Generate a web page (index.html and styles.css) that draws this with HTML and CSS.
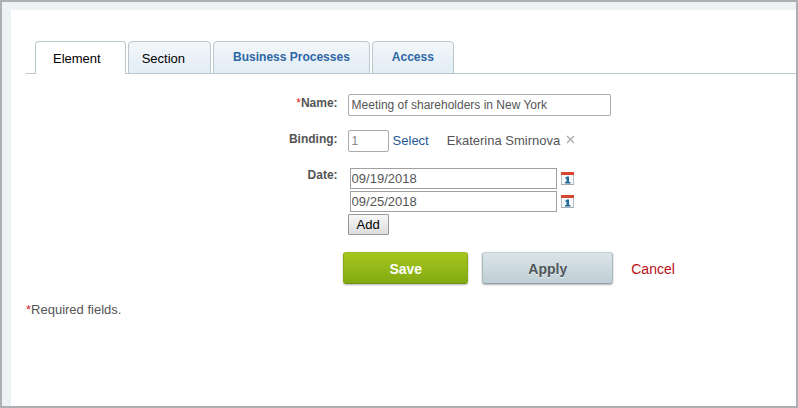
FILE: index.html
```
<!DOCTYPE html>
<html lang="en">
<head>
<meta charset="utf-8">
<title>Element</title>
<link rel="stylesheet" href="styles.css">
</head>
<body>
<main class="panel">
  <nav class="tabs">
    <a class="tab tab-active" href="#element">Element</a>
    <a class="tab tab-plain" href="#section">Section</a>
    <a class="tab" href="#processes">Business Processes</a>
    <a class="tab" href="#access">Access</a>
  </nav>
  <form class="form">
    <div class="row">
      <label class="label" for="name"><span class="star">*</span>Name:</label>
      <div class="field"><input class="input input-name" id="name" type="text" value="Meeting of shareholders in New York"></div>
    </div>
    <div class="row">
      <label class="label" for="binding">Binding:</label>
      <div class="field">
        <input class="input input-id" id="binding" type="text" value="1">
        <a class="select-link" href="#select">Select</a>
        <span class="user">Ekaterina Smirnova</span>
        <button class="remove" type="button" aria-label="Remove">
          <svg width="9" height="9" viewBox="0 0 9 9"><path d="M1 1l7 7M8 1l-7 7" stroke="#aaa" stroke-width="1.3" fill="none"/></svg>
        </button>
      </div>
    </div>
    <div class="row">
      <label class="label" for="date1">Date:</label>
      <div class="dates">
        <div class="date">
          <input class="date-input" id="date1" type="text" value="09/19/2018">
          <button class="calendar" type="button" aria-label="Calendar">
            <svg width="14" height="15" viewBox="0 0 14 15"><path d="M.5 1.500h12v12H.5z" fill="#f5f8fa" stroke="#b9bec3"/><path d="M0 1h13v3H0z" fill="#d5472f"/><path d="M0 13.500h13" stroke="#a5abb0"/><path d="M4 7l2-1.500h2V11h1.500v1.500H4V11h1.500V7.500H4z" fill="#21689a"/></svg>
          </button>
        </div>
        <div class="date">
          <input class="date-input" type="text" value="09/25/2018" aria-label="Date 2">
          <button class="calendar" type="button" aria-label="Calendar">
            <svg width="14" height="15" viewBox="0 0 14 15"><path d="M.5 1.500h12v12H.5z" fill="#f5f8fa" stroke="#b9bec3"/><path d="M0 1h13v3H0z" fill="#d5472f"/><path d="M0 13.500h13" stroke="#a5abb0"/><path d="M4 7l2-1.500h2V11h1.500v1.500H4V11h1.500V7.500H4z" fill="#21689a"/></svg>
          </button>
        </div>
        <button class="add" type="button">Add</button>
      </div>
    </div>
    <div class="actions">
      <button class="button save" type="submit">Save</button>
      <button class="button apply" type="button">Apply</button>
      <a class="cancel" href="#cancel">Cancel</a>
    </div>
  </form>
  <p class="note"><span class="star">*</span>Required fields.</p>
</main>
</body>
</html>
```
FILE: styles.css
```
* {
  box-sizing: border-box;
}

body {
  display: flex;
  min-height: 100vh;
  margin: 0;
  padding: 8px 0 0 9px;
  border: 2px solid #adafb2;
  background: #edf2f5;
  color: #555;
  font: 13px/16px "Liberation Sans", Arial, sans-serif;
}

input,
button {
  margin: 0;
  font: inherit;
  color: inherit;
}

a {
  color: #1f5794;
  text-decoration: none;
}

.panel {
  flex: 1;
  padding: 31px 0 0 15px;
  background: #fff;
}

.tabs {
  display: flex;
  gap: 2px;
  padding-left: 9px;
  background: linear-gradient(#b9c6cb, #b9c6cb) bottom / 100% 1px no-repeat;
}

.tab {
  height: 33px;
  padding: 0 19px;
  border: 1px solid #b9c8cd;
  border-radius: 4px 4px 0 0;
  background: linear-gradient(#f3f6f8, #e2edf6);
  color: #2d66a5;
  font-size: 12px;
  font-weight: bold;
  line-height: 30px;
}

.tab-active,
.tab-plain {
  color: #000;
  font-size: 13px;
  font-weight: normal;
  line-height: 34px;
}

.tab-plain {
  padding: 0 25px 0 13px;
}

.tab-active {
  padding: 0 24px 0 17px;
  border-bottom: 0;
  background: #fff;
}

.form {
  display: flex;
  flex-direction: column;
  gap: 14px;
  padding-top: 20px;
}

.row {
  display: grid;
  grid-template-columns: 41fr 59fr;
  column-gap: 10px;
}

.label {
  padding-top: 1px;
  font-size: 12px;
  font-weight: bold;
  text-align: right;
}

.star {
  color: #d8232a;
  font-weight: normal;
}

.field {
  display: flex;
  align-items: center;
}

.input {
  height: 22px;
  padding: 0 3px;
  border: 1px solid #aaa;
  border-radius: 2px;
  background: #fff;
  font-size: 12px;
}

.input-name {
  width: 263px;
}

.input-id {
  width: 41px;
  color: #888;
}

.select-link {
  margin-left: 4px;
}

.user {
  margin-left: 18px;
}

.remove,
.calendar {
  display: flex;
  padding: 0;
  border: 0;
  background: none;
}

.remove {
  margin: 0 0 4px 6px;
}

.dates {
  display: flex;
  flex-direction: column;
  align-items: flex-start;
  gap: 2px;
  padding-top: 2px;
}

.date {
  display: flex;
  align-items: center;
  gap: 4px;
  padding-left: 2px;
}

.date-input {
  width: 207px;
  height: 21px;
  padding: 0 1px;
  border: 1px solid #a0a0a0;
  background: #fff;
}

.add {
  height: 21px;
  padding: 0 8px;
  border: 1px solid #999;
  border-radius: 1px;
  background: linear-gradient(#f8f8f8, #ddd);
  color: #000;
}

.actions {
  display: flex;
  align-items: center;
  padding: 3px 0 0 41.2%;
  font-size: 14px;
}

.button {
  height: 32px;
  padding: 2px 0 0;
  border: 1px solid;
  border-radius: 3px;
  box-shadow: 0 1px 2px rgba(0, 0, 0, 0.3);
  font-weight: bold;
}

.save {
  width: 125px;
  border-color: #9cba24 #86aa15 #729411;
  background: linear-gradient(#a5c71c, #82a913);
  color: #fff;
}

.apply {
  width: 131px;
  margin: 0 18px 0 14px;
  border-color: #c3cfd3 #a9b8bd #93a2a7;
  background: linear-gradient(#dbe4e8, #bfcfd5);
  color: #4f5559;
  text-shadow: 0 1px 0 #e9eff1;
}

.cancel {
  padding-top: 2px;
  color: #b90e16;
}

.note {
  margin: 18px 0 0;
}
```
